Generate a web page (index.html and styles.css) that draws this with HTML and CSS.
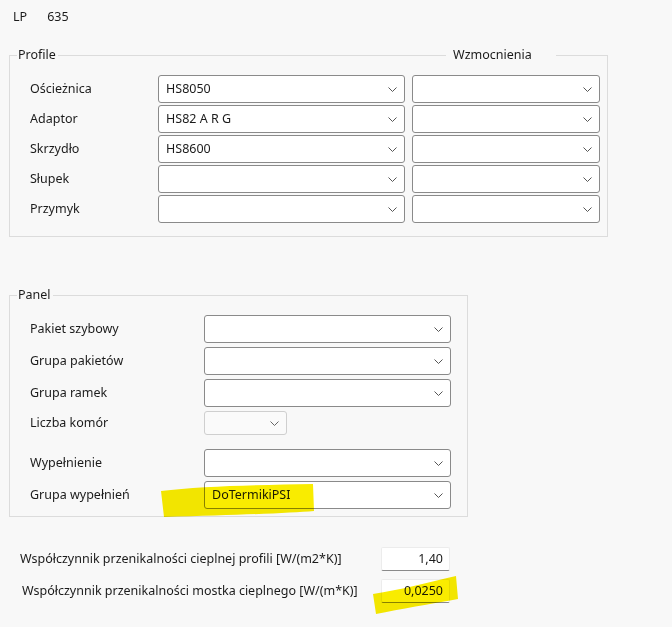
FILE: index.html
```html
<!DOCTYPE html>
<html lang="pl">
<head>
  <meta charset="UTF-8">
  <title>Termika - LP 635</title>
  <link rel="stylesheet" href="styles.css">
</head>
<body>
  <div class="lp"><span>LP</span><span>635</span></div>

  <fieldset class="group profile">
    <legend class="group-head">
      <span class="rule lead"></span><span class="title">Profile</span><span class="rule"></span>
      <span class="title col-title">Wzmocnienia</span><span class="rule tail"></span>
    </legend>
    <div class="profile-grid">
      <label>Ościeżnica</label>
      <div class="combo"><span>HS8050</span><svg width="9" height="5" viewBox="0 0 9 5"><polyline points="0.5,0.5 4.5,4.5 8.5,0.5"/></svg></div>
      <div class="combo"><span></span><svg width="9" height="5" viewBox="0 0 9 5"><polyline points="0.5,0.5 4.5,4.5 8.5,0.5"/></svg></div>

      <label>Adaptor</label>
      <div class="combo"><span>HS82 A R G</span><svg width="9" height="5" viewBox="0 0 9 5"><polyline points="0.5,0.5 4.5,4.5 8.5,0.5"/></svg></div>
      <div class="combo"><span></span><svg width="9" height="5" viewBox="0 0 9 5"><polyline points="0.5,0.5 4.5,4.5 8.5,0.5"/></svg></div>

      <label>Skrzydło</label>
      <div class="combo"><span>HS8600</span><svg width="9" height="5" viewBox="0 0 9 5"><polyline points="0.5,0.5 4.5,4.5 8.5,0.5"/></svg></div>
      <div class="combo"><span></span><svg width="9" height="5" viewBox="0 0 9 5"><polyline points="0.5,0.5 4.5,4.5 8.5,0.5"/></svg></div>

      <label>Słupek</label>
      <div class="combo"><span></span><svg width="9" height="5" viewBox="0 0 9 5"><polyline points="0.5,0.5 4.5,4.5 8.5,0.5"/></svg></div>
      <div class="combo"><span></span><svg width="9" height="5" viewBox="0 0 9 5"><polyline points="0.5,0.5 4.5,4.5 8.5,0.5"/></svg></div>

      <label>Przymyk</label>
      <div class="combo"><span></span><svg width="9" height="5" viewBox="0 0 9 5"><polyline points="0.5,0.5 4.5,4.5 8.5,0.5"/></svg></div>
      <div class="combo"><span></span><svg width="9" height="5" viewBox="0 0 9 5"><polyline points="0.5,0.5 4.5,4.5 8.5,0.5"/></svg></div>
    </div>
  </fieldset>

  <fieldset class="group panel">
    <legend class="group-head">
      <span class="rule lead"></span><span class="title">Panel</span><span class="rule"></span>
    </legend>
    <div class="panel-grid">
      <label>Pakiet szybowy</label>
      <div class="combo"><span></span><svg width="9" height="5" viewBox="0 0 9 5"><polyline points="0.5,0.5 4.5,4.5 8.5,0.5"/></svg></div>

      <label>Grupa pakietów</label>
      <div class="combo"><span></span><svg width="9" height="5" viewBox="0 0 9 5"><polyline points="0.5,0.5 4.5,4.5 8.5,0.5"/></svg></div>

      <label>Grupa ramek</label>
      <div class="combo"><span></span><svg width="9" height="5" viewBox="0 0 9 5"><polyline points="0.5,0.5 4.5,4.5 8.5,0.5"/></svg></div>

      <label class="short">Liczba komór</label>
      <div class="combo small disabled"><span></span><svg width="9" height="5" viewBox="0 0 9 5"><polyline points="0.5,0.5 4.5,4.5 8.5,0.5"/></svg></div>

      <label>Wypełnienie</label>
      <div class="combo"><span></span><svg width="9" height="5" viewBox="0 0 9 5"><polyline points="0.5,0.5 4.5,4.5 8.5,0.5"/></svg></div>

      <label>Grupa wypełnień</label>
      <div class="combo"><span>DoTermikiPSI</span><svg width="9" height="5" viewBox="0 0 9 5"><polyline points="0.5,0.5 4.5,4.5 8.5,0.5"/></svg></div>
    </div>
  </fieldset>

  <div class="coeffs">
    <label>Współczynnik przenikalności cieplnej profili [W/(m2*K)]</label>
    <div class="textbox">1,40</div>
    <label class="indent">Współczynnik przenikalności mostka cieplnego [W/(m*K)]</label>
    <div class="textbox">0,0250</div>
  </div>

  <!-- zaznaczenia markerem -->
  <svg class="marker" width="672" height="627" viewBox="0 0 672 627">
    <path d="M161 491 C 200 486, 260 485, 313 484 L 314 511 C 290 513, 240 515, 164 517 Z"/>
    <path d="M373 594 C 400 590, 430 582, 456 576 L 458 599 C 430 604, 400 609, 376 614 Z"/>
  </svg>
</body>
</html>
```

FILE: styles.css
```css
*{box-sizing:border-box;}
body{margin:0;position:relative;background:#f8f8f8;color:#1b1b1b;font-family:"Noto Sans",sans-serif;font-size:12.5px;line-height:16px;min-height:627px;}

.lp{display:flex;gap:20px;padding:9px 13px 0;height:25px;}

.group{border:1px solid #dcdcdc;padding:0;margin:0 0 0 9px;min-width:0;}
.group-head{display:flex;align-items:center;width:100%;padding:0;height:16px;}
.group-head .rule{flex:1;height:1px;background:#dcdcdc;}
.group-head .rule.lead{flex:none;width:7px;}
.group-head .rule.tail{flex:none;width:51px;}
.group-head .title{padding:0 2px 0 1px;}
.group-head .col-title{width:110px;padding-left:7px;}

.profile{width:599px;margin-top:22px;}
.profile-grid{display:grid;grid-template-columns:121px 247px 188px;column-gap:7px;row-gap:2px;grid-auto-rows:28px;padding:12px 7px 13px 20px;align-items:center;}

.panel{width:459px;margin-top:50px;}
.panel-grid{display:grid;grid-template-columns:174px 247px;row-gap:4px;padding:12px 16px 7px 20px;align-items:center;}
.panel-grid .short{margin-bottom:10px;}

.combo{display:flex;align-items:center;justify-content:space-between;height:28px;background:#fff;border:1px solid #8a8a8a;border-radius:3px;padding:0 7px 0 7px;}
.combo svg{flex:none;}
.combo polyline{fill:none;stroke:#555;stroke-width:1;}
.combo.small{width:83px;height:24px;margin-bottom:10px;}
.combo.disabled{background:#fafafa;border-color:#cfcfcf;}
.combo.disabled polyline{stroke:#666;}

.coeffs{display:grid;grid-template-columns:361px 69px;row-gap:8px;margin-top:30px;padding-left:20px;align-items:center;}
.coeffs .indent{padding-left:2px;}
.textbox{height:24px;background:#fff;border:1px solid #ececec;border-bottom-color:#8a8a8a;border-radius:2px;text-align:right;padding:3px 6px 0 0;}

.marker{position:absolute;top:0;left:0;pointer-events:none;mix-blend-mode:multiply;}
.marker path{fill:#f9ec00;}
```
